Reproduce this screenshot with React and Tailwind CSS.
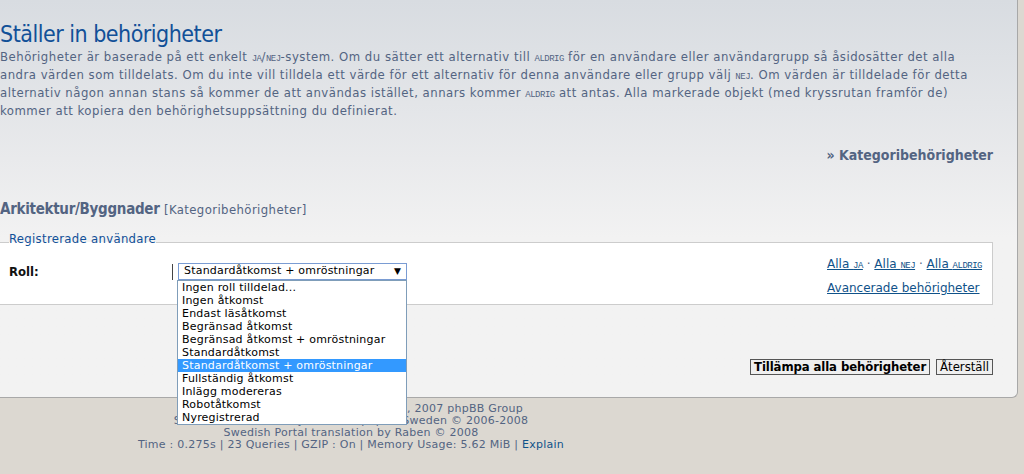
import React from "react";

const options = [
  "Ingen roll tilldelad...",
  "Ingen åtkomst",
  "Endast läsåtkomst",
  "Begränsad åtkomst",
  "Begränsad åtkomst + omröstningar",
  "Standardåtkomst",
  "Standardåtkomst + omröstningar",
  "Fullständig åtkomst",
  "Inlägg modereras",
  "Robotåtkomst",
  "Nyregistrerad",
];

// small caps word used for JA / NEJ / ALDRIG
function Sc({ children }) {
  return (
    <span className="text-[9px] leading-[0] uppercase font-['Liberation_Mono',monospace] tracking-[-0.5px]">
      {children}
    </span>
  );
}

export default function App() {
  return (
    <div className="min-h-[474px] bg-[#dcd8d1] font-['DejaVu_Sans_Condensed','DejaVu_Sans',sans-serif]">
      <div className="flex">
        {/* main panel */}
        <div className="w-[1018px] border-r border-b border-[#a8a8a8] rounded-br-[6px] bg-linear-to-b from-[#d8dce1] via-[#e9eaec] via-40% to-[#f2f2f2] to-60% pr-[24px] pb-[22px]">
          <h1 className="pt-[20px] text-[23px] leading-[28px] tracking-[-0.5px] text-[#115098]">Ställer in behörigheter</h1>
          <p className="text-[13px] leading-[18px] tracking-[0.5px] text-[#536482]">
            Behörigheter är baserade på ett enkelt <Sc>ja</Sc>/<Sc>nej</Sc>-system. Om du sätter ett alternativ till <Sc>aldrig</Sc> för en användare eller användargrupp så åsidosätter det alla
            <br />
            andra värden som tilldelats. Om du inte vill tilldela ett värde för ett alternativ för denna användare eller grupp välj <Sc>nej</Sc>. Om värden är tilldelade för detta
            <br />
            alternativ någon annan stans så kommer de att användas istället, annars kommer <Sc>aldrig</Sc> att antas. Alla markerade objekt (med kryssrutan framför de)
            <br />
            kommer att kopiera den behörighetsuppsättning du definierat.
          </p>

          <div className="mt-[27px] flex justify-end">
            <span className="text-[14px] leading-[16px] font-bold text-[#536482]">» Kategoribehörigheter</span>
          </div>

          <h2 className="mt-[37px] text-[15px] leading-[18px] font-bold tracking-[-0.3px] text-[#536482]">
            Arkitektur/Byggnader <span className="text-[13px] font-normal tracking-[0.4px]">[Kategoribehörigheter]</span>
          </h2>

          <fieldset className="mt-[13px] border border-[#cccccc] border-l-0 bg-white px-[9px] pb-[9px]">
            <legend className="pb-[6px] text-[13px] leading-[14px] tracking-[0.3px] text-[#115098]">Registrerade användare</legend>
            <div className="flex items-start pt-[11px]">
              <div className="w-[163px] pt-[1px] text-[13px] leading-[16px] font-bold text-[#111]">Roll:</div>
              <div className="mt-[1px] h-[16px] w-px bg-[#444]" />
              <div className="relative ml-[5px]">
                <div className="flex h-[17px] w-[229px] items-center justify-between border border-[#7a9cd3] px-[5px] font-['DejaVu_Sans',sans-serif] text-[11px] tracking-[0.2px] text-black">
                  <span>Standardåtkomst + omröstningar</span>
                  <span className="text-[9px]">▼</span>
                </div>
                <ul className="absolute left-[-1px] top-[17px] z-10 w-[230px] border border-[#7f9db9] bg-white font-['DejaVu_Sans',sans-serif] text-[11px] leading-[13px] tracking-[0.2px] text-black">
                  {options.map((o) =>
                    o === "Standardåtkomst + omröstningar" ? (
                      <li key={o} className="bg-[#3399ff] pl-[4px] text-white">{o}</li>
                    ) : (
                      <li key={o} className="pl-[4px]">{o}</li>
                    )
                  )}
                </ul>
              </div>
              <div className="ml-auto -mt-[6px] flex flex-col items-start pr-[1px] font-['DejaVu_Sans',sans-serif] text-[#105289]">
                <div className="text-[12px] leading-[14px]">
                  <span className="underline">Alla <Sc>ja</Sc></span>
                  <span className="text-[#536482]"> · </span>
                  <span className="underline">Alla <Sc>nej</Sc></span>
                  <span className="text-[#536482]"> · </span>
                  <span className="underline">Alla <Sc>aldrig</Sc></span>
                </div>
                <div className="mt-[10px] text-[12px] leading-[14px] underline">Avancerade behörigheter</div>
              </div>
            </div>
          </fieldset>

          <div className="mt-[54px] flex justify-end gap-[6px]">
            <button className="h-[16px] border border-[#555] bg-[#efefef] px-[3px] text-[13px] leading-[14px] font-bold tracking-[-0.1px] text-black">
              Tillämpa alla behörigheter
            </button>
            <button className="h-[16px] border border-[#555] bg-[#efefef] px-[3px] text-[13px] leading-[14px] text-black">
              Återställ
            </button>
          </div>
        </div>
      </div>

      {/* footer */}
      <div className="w-[702px] pt-[5px] text-center font-['DejaVu_Sans',sans-serif] text-[11px] leading-[12px] tracking-[0.25px] text-[#536482]">
        <div>Powered by phpBB © 2000, 2002, 2005, 2007 phpBB Group</div>
        <div>Swedish translation by Peetra &amp; phpBB Sweden © 2006-2008</div>
        <div>Swedish Portal translation by Raben © 2008</div>
        <div>
          Time : 0.275s | 23 Queries | GZIP : On | Memory Usage: 5.62 MiB | <span className="text-[#105289]">Explain</span>
        </div>
      </div>
    </div>
  );
}
